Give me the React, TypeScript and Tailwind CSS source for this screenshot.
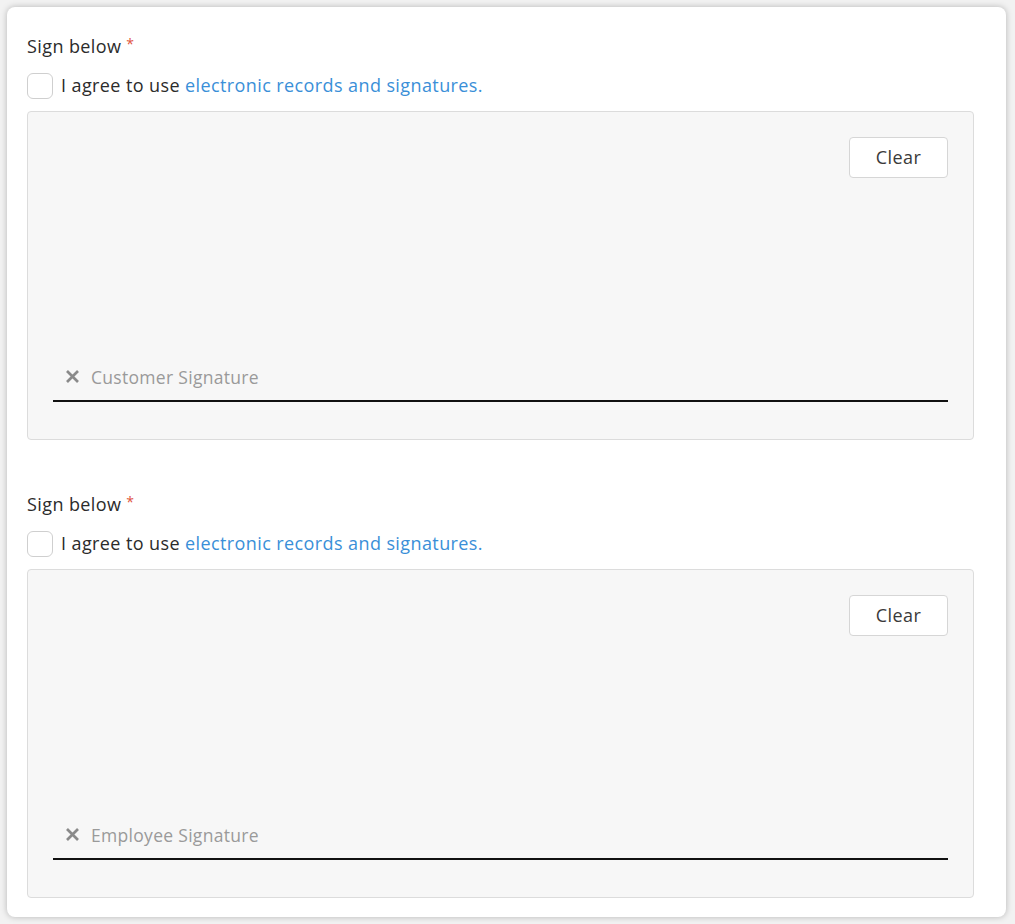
function SignatureField({ placeholder }: { placeholder: string }) {
  return (
    <div>
      <div className="flex h-[26px] items-center text-[18px] tracking-[0.4px] text-[#2b2b2b]">
        Sign below
        <span className="ml-[5px] -mt-[6px] text-[14px] text-[#e0533c]">*</span>
      </div>
      <label className="mt-[13px] flex items-center gap-[8px] text-[18px] tracking-[0.4px] text-[#2b2b2b]">
        <span className="h-[26px] w-[26px] rounded-[6px] border border-[#cfcfcf] bg-white" />
        <span>
          I agree to use{" "}
          <a className="text-[#3a8fd8]">electronic records and signatures.</a>
        </span>
      </label>
      <div className="mt-[12px] flex h-[329px] w-[947px] flex-col rounded-[4px] border border-[#dcdcdc] bg-[#f7f7f7] pl-[25px] pr-[25px]">
        <div className="flex justify-end pt-[25px]">
          <button className="h-[41px] w-[99px] rounded-[4px] border border-[#d6d6d6] bg-white text-[18px] tracking-[0.4px] text-[#3a3a3a]">
            Clear
          </button>
        </div>
        <div className="flex-1" />
        <div className="flex items-center gap-[11px] pl-[12px] pb-[10px] text-[17.5px] tracking-[0.3px] text-[#9a9a9a]">
          <svg width="15" height="15" viewBox="0 0 15 15" fill="none">
            <path d="M2 2L13 13M13 2L2 13" stroke="#8a8a8a" strokeWidth="2.7" />
          </svg>
          {placeholder}
        </div>
        <div className="h-[2px] bg-[#111]" />
        <div className="h-[37px]" />
      </div>
    </div>
  );
}

export default function App() {
  return (
    <div className="min-h-[924px] bg-[#f2f2f2] p-[7px] font-['Open_Sans',sans-serif]">
      <div className="h-[910px] w-[999px] rounded-[8px] bg-white pl-[20px] pt-[26px] shadow-[0_0_6px_rgba(0,0,0,0.25)]">
        <SignatureField placeholder="Customer Signature" />
        <div className="h-[51px]" />
        <SignatureField placeholder="Employee Signature" />
      </div>
    </div>
  );
}
